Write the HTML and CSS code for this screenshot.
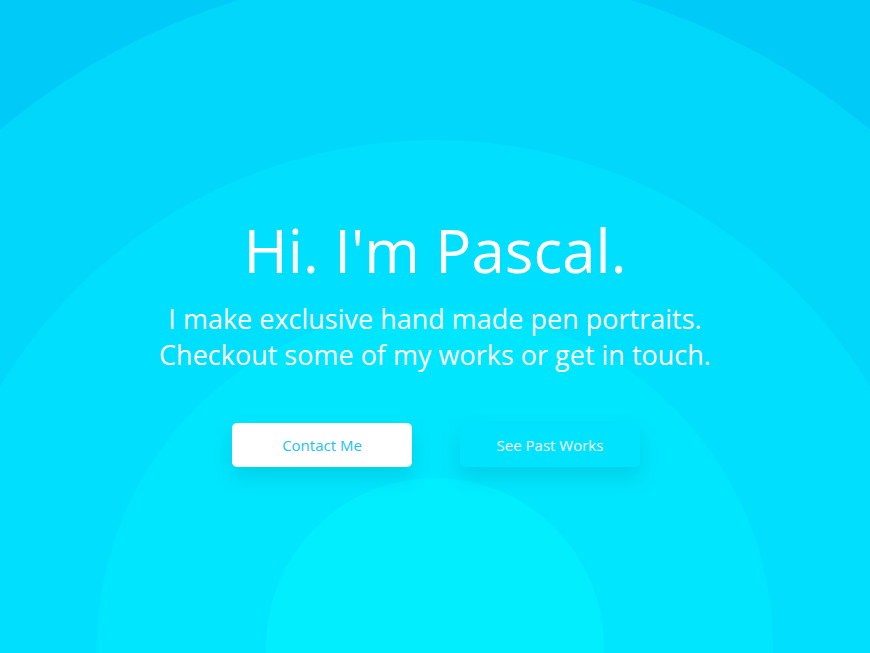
FILE: index.html
```html
<!DOCTYPE html>
<html lang="en">
<head>
<meta charset="utf-8">
<title>Pascal</title>
<link rel="stylesheet" href="styles.css">
</head>
<body>
<main class="hero">
  <div class="rings" aria-hidden="true">
    <span class="ring ring-1"></span>
    <span class="ring ring-2"></span>
    <span class="ring ring-3"></span>
    <span class="ring ring-4"></span>
  </div>
  <div class="content">
    <h1 class="title">Hi. I'm Pascal.</h1>
    <p class="lead">I make exclusive hand made pen portraits.<br>Checkout some of my works or get in touch.</p>
    <div class="actions">
      <a class="btn btn-light" href="#">Contact Me</a>
      <a class="btn btn-ghost" href="#">See Past Works</a>
    </div>
  </div>
</main>
</body>
</html>
```
FILE: styles.css
```css
html, body {
  margin: 0;
  padding: 0;
  height: 100%;
}
body {
  font-family: "Open Sans", "Liberation Sans", sans-serif;
  background: #00caf7;
  overflow: hidden;
}
.hero {
  position: relative;
  width: 100%;
  height: 653px;
  overflow: hidden;
  background: #00caf7;
}
.rings {
  position: absolute;
  inset: 0;
}
.ring {
  position: absolute;
  left: 50%;
  top: 647px;
  border-radius: 50%;
  transform: translate(-50%, -50%);
}
.ring-1 { width: 1352px; height: 1352px; background: #00d7fb; }
.ring-2 { width: 1014px; height: 1014px; background: #00dffd; }
.ring-3 { width: 676px; height: 676px; background: #00e6fe; }
.ring-4 { width: 338px; height: 338px; background: #00eeff; }
.content {
  position: relative;
  display: flex;
  flex-direction: column;
  align-items: center;
  padding-top: 210px;
  color: #fff;
  text-align: center;
}
.title {
  margin: 0;
  font-size: 60px;
  font-weight: 400;
  line-height: 80px;
  letter-spacing: 0;
}
.lead {
  margin: 11px 0 0;
  font-size: 27px;
  font-weight: 400;
  line-height: 36px;
}
.actions {
  display: flex;
  gap: 48px;
  margin-top: 50px;
  padding-left: 2px;
}
.btn {
  display: flex;
  align-items: center;
  justify-content: center;
  width: 180px;
  height: 44px;
  border-radius: 5px;
  font-size: 15px;
  text-decoration: none;
  box-shadow: 0 10px 20px rgba(0, 80, 110, 0.15);
}
.btn-light {
  background: #fff;
  color: #22bff2;
}
.btn-ghost {
  background: #00e3fe;
  color: #fff;
}
```
